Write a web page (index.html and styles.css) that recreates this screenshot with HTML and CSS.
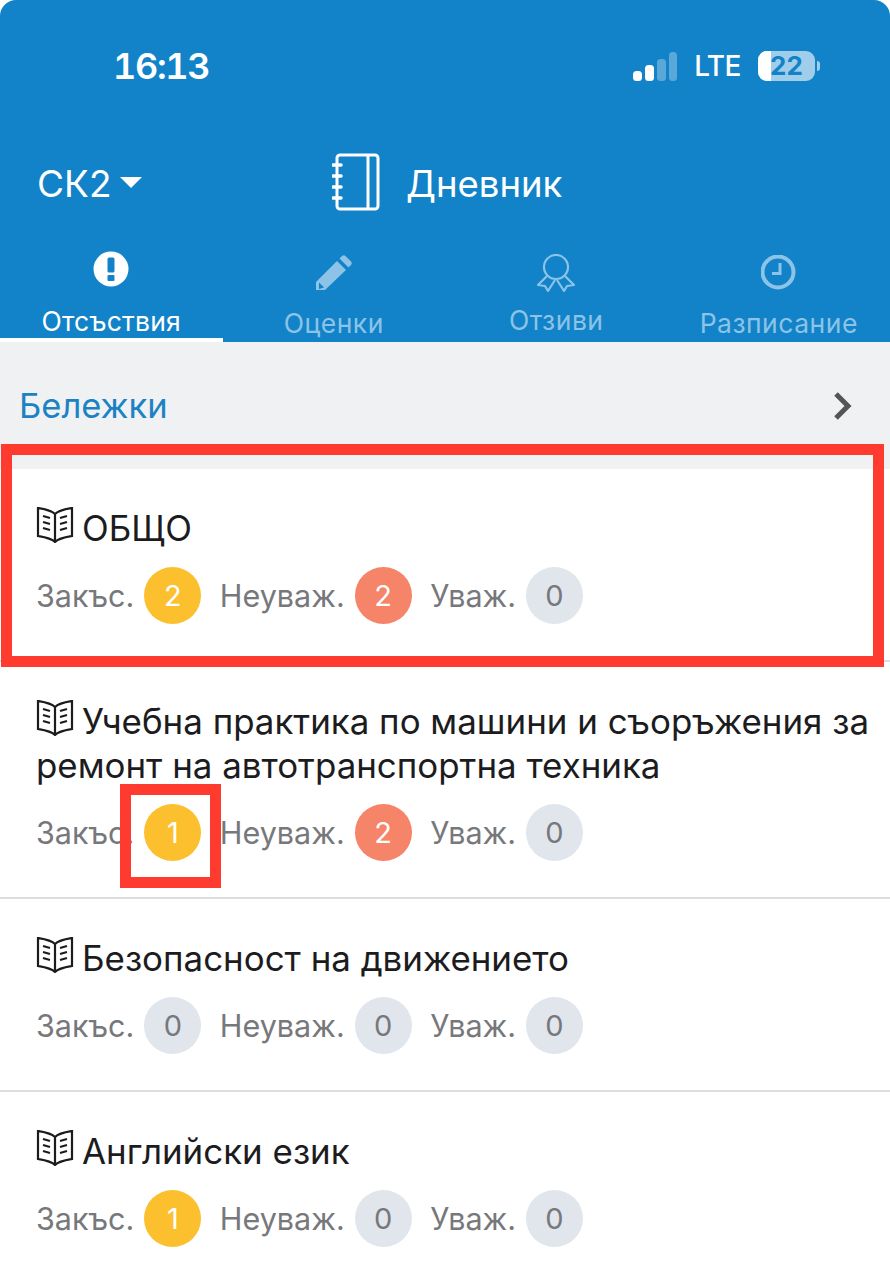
FILE: index.html
```html
<!DOCTYPE html>
<html lang="bg">
<head>
  <meta charset="UTF-8">
  <meta name="viewport" content="width=device-width, initial-scale=1.0">
  <title>Дневник</title>
  <link rel="stylesheet" href="styles.css">
</head>
<body>
  <div class="screen">
    <header class="header">
      <div class="status">
        <span class="time">16:13</span>
        <div class="status-right">
          <svg class="signal" viewBox="0 0 44 30" width="44" height="30">
            <rect x="0" y="20" width="9" height="10" rx="3.5" fill="#fff"/>
            <rect x="12" y="14" width="9" height="16" rx="3.5" fill="#fff"/>
            <rect x="24" y="8" width="9" height="22" rx="3.5" fill="#fff" opacity=".3"/>
            <rect x="36" y="1" width="8" height="29" rx="3.5" fill="#fff" opacity=".3"/>
          </svg>
          <span class="lte">LTE</span>
          <div class="battery"><span class="battery-level"></span><span class="battery-num">22</span></div>
          <span class="battery-cap"></span>
        </div>
      </div>
      <div class="titlebar">
        <div class="class-select"><span class="class-name">СК2</span><span class="caret"></span></div>
        <div class="title">
          <svg class="notebook" viewBox="0 0 50 58" width="50" height="58" fill="none" stroke="#fff" stroke-width="3">
            <rect x="5" y="2" width="41" height="54" rx="3"/>
            <path d="M36 2v54"/>
            <path d="M1 12h8M1 23h8M1 34h8M1 45h8" stroke-width="3.5" stroke-linecap="round"/>
          </svg>
          <span class="title-text">Дневник</span>
        </div>
      </div>
      <nav class="tabs">
        <div class="tab tab-active">
          <svg viewBox="0 0 36 36" width="36" height="36"><circle cx="18" cy="18" r="17.5" fill="#fff"/><rect x="14.5" y="6.500" width="7" height="15" rx="1.500" fill="#1283c9"/><rect x="14.500" y="24" width="7" height="6" rx="1" fill="#1283c9"/></svg>
          <span>Отсъствия</span>
        </div>
        <div class="tab tab-grades">
          <svg viewBox="0 0 36 36" width="36" height="36" fill="#8cc3e6"><path d="M0 35V27L21 6l9 9L9 35z"/><path d="M23.500 3.500 26 1c1-1 2.500-1 3.500 0l5.500 5.500c1 1 1 2.500 0 3.500l-2.500 2.500z"/><path d="M3 27.500 8 32.500 3 34z" fill="#1283c9"/></svg>
          <span>Оценки</span>
        </div>
        <div class="tab tab-reviews">
          <svg viewBox="0 0 38 38" width="38" height="38" fill="none" stroke="#8cc3e6" stroke-width="2.200" stroke-linejoin="round"><circle cx="19" cy="13" r="12"/><path d="M10 22 1 31l7 1 3 5 7-11M28 22l9 9-7 1-3 5-7-11"/></svg>
          <span>Отзиви</span>
        </div>
        <div class="tab tab-schedule">
          <svg viewBox="0 0 36 36" width="36" height="36" fill="none" stroke="#8cc3e6"><circle cx="17" cy="17" r="15.500" stroke-width="4"/><path d="M19 8v10.500h-8" stroke-width="3"/></svg>
          <span>Разписание</span>
        </div>
      </nav>
    </header>

    <div class="notes-row">
      <span>Бележки</span>
      <svg viewBox="0 0 20 30" width="20" height="30" fill="none" stroke="#555" stroke-width="5"><path d="M3 3l12 12L3 27"/></svg>
    </div>

    <section class="subject subject-total">
      <h2><svg class="book" viewBox="0 0 38 36" width="38" height="36" fill="none" stroke="#1c1c1e" stroke-width="2.200"><path d="M19 7C15 3 8 2 2 1v28c6 1 13 2 17 6 4-4 11-5 17-6V1c-6 1-13 2-17 6zM19 7v28"/><path d="M7 9l7 2M7 15l7 2M7 21l7 2M24 11l7-2M24 17l7-2M24 23l7-2"/></svg>ОБЩО</h2>
      <div class="counts">
        <span class="label">Закъс.</span><span class="badge badge-late">2</span>
        <span class="label">Неуваж.</span><span class="badge badge-bad">2</span>
        <span class="label">Уваж.</span><span class="badge">0</span>
      </div>
    </section>

    <section class="subject subject-long">
      <h2><svg class="book" viewBox="0 0 38 36" width="38" height="36" fill="none" stroke="#1c1c1e" stroke-width="2.200"><path d="M19 7C15 3 8 2 2 1v28c6 1 13 2 17 6 4-4 11-5 17-6V1c-6 1-13 2-17 6zM19 7v28"/><path d="M7 9l7 2M7 15l7 2M7 21l7 2M24 11l7-2M24 17l7-2M24 23l7-2"/></svg>Учебна практика по машини и съоръжения за ремонт на автотранспортна техника</h2>
      <div class="counts">
        <span class="label">Закъс.</span><span class="badge badge-late">1</span>
        <span class="label">Неуваж.</span><span class="badge badge-bad">2</span>
        <span class="label">Уваж.</span><span class="badge">0</span>
      </div>
    </section>

    <section class="subject">
      <h2><svg class="book" viewBox="0 0 38 36" width="38" height="36" fill="none" stroke="#1c1c1e" stroke-width="2.200"><path d="M19 7C15 3 8 2 2 1v28c6 1 13 2 17 6 4-4 11-5 17-6V1c-6 1-13 2-17 6zM19 7v28"/><path d="M7 9l7 2M7 15l7 2M7 21l7 2M24 11l7-2M24 17l7-2M24 23l7-2"/></svg>Безопасност на движението</h2>
      <div class="counts">
        <span class="label">Закъс.</span><span class="badge">0</span>
        <span class="label">Неуваж.</span><span class="badge">0</span>
        <span class="label">Уваж.</span><span class="badge">0</span>
      </div>
    </section>

    <section class="subject">
      <h2><svg class="book" viewBox="0 0 38 36" width="38" height="36" fill="none" stroke="#1c1c1e" stroke-width="2.200"><path d="M19 7C15 3 8 2 2 1v28c6 1 13 2 17 6 4-4 11-5 17-6V1c-6 1-13 2-17 6zM19 7v28"/><path d="M7 9l7 2M7 15l7 2M7 21l7 2M24 11l7-2M24 17l7-2M24 23l7-2"/></svg>Английски език</h2>
      <div class="counts">
        <span class="label">Закъс.</span><span class="badge badge-late">1</span>
        <span class="label">Неуваж.</span><span class="badge">0</span>
        <span class="label">Уваж.</span><span class="badge">0</span>
      </div>
    </section>

    <!-- red marks drawn over the screenshot -->
    <div class="mark mark-total"></div>
    <div class="mark mark-late"></div>
  </div>
</body>
</html>
```

FILE: styles.css
```css
html, body { margin: 0; padding: 0; background: #fff; }
body { font-family: Inter, "Noto Sans", sans-serif; color: #1c1c1e; }
.screen { position: relative; width: 890px; height: 1280px; overflow: hidden; background: #fff; }

.header { height: 342px; background: #1283c9; color: #fff; border-radius: 16px 16px 0 0; box-sizing: border-box; padding-top: 44px; }
.status { display: flex; justify-content: space-between; align-items: center; height: 44px; padding: 0 70px 0 113px; }
.time { font-size: 36px; font-weight: 600; font-variant-numeric: tabular-nums; letter-spacing: -1.300px; }
.status-right { display: flex; align-items: center; }
.signal { margin-right: 17px; }
.lte { font-size: 28px; font-weight: 500; margin-right: 17px; letter-spacing: -0.5px; }
.battery { position: relative; width: 57px; height: 30px; border-radius: 9px; background: rgba(255,255,255,.6); overflow: hidden; text-align: center; }
.battery-level { position: absolute; left: 0; top: 0; bottom: 0; width: 13px; background: #fff; }
.battery-num { position: relative; font-size: 26px; line-height: 30px; font-weight: 700; color: #1283c9; }
.battery-cap { width: 3px; height: 10px; margin-left: 2px; border-radius: 0 3px 3px 0; background: rgba(255,255,255,.6); }

.titlebar { position: relative; display: flex; align-items: center; height: 62px; margin-top: 63px; padding-left: 37px; }
.class-select { display: flex; align-items: center; font-size: 37px; }
.class-name { padding-top: 2px; }
.caret { width: 0; height: 0; margin-left: 9px; border-left: 11px solid transparent; border-right: 11px solid transparent; border-top: 11px solid #fff; }
.title { position: absolute; left: 332px; top: 2px; display: flex; align-items: center; gap: 24px; font-size: 36.500px; }
.title-text { padding-top: 3px; }

.tabs { display: grid; grid-template-columns: repeat(4, 1fr); height: 95px; margin-top: 34px; }
.tab { display: flex; flex-direction: column; align-items: center; height: 95px; box-sizing: border-box; padding-top: 4px; gap: 18px; font-size: 26.500px; color: #8cc3e6; letter-spacing: .5px; }
.tab svg { flex: none; }
.tab-active { color: #fff; border-bottom: 4px solid #fff; letter-spacing: .2px; }
.tab-grades, .tab-schedule { padding-top: 8px; gap: 16px; }
.tab-reviews { padding-top: 7px; gap: 12px; }

.notes-row { display: flex; justify-content: space-between; align-items: center; height: 127px; box-sizing: border-box; padding: 0 37px 0 19px; background: #f0f1f2; color: #1b82c4; font-size: 34.500px; }

.subject { box-sizing: border-box; height: 193px; padding: 37px 15px 0 36px; border-bottom: 2px solid #dcdde0; background: #fff; }
.subject-total { height: 193px; }
.subject-long { height: 237px; }
.subject h2 { margin: 0 0 16px; font-size: 34.900px; line-height: 44px; font-weight: 400; color: #1c1c1e; }
.book { width: 38px; height: 36px; margin-right: 8px; vertical-align: -2px; }
.counts { display: flex; align-items: center; height: 58px; font-size: 30.500px; color: #77787b; }
.label { margin-right: 10px; }
.badge { display: flex; justify-content: center; align-items: center; width: 57px; height: 57px; margin-right: 18.500px; border-radius: 50%; background: #e1e5ec; color: #77787b; font-size: 29px; }
.badge-late { background: #fcc02e; color: #fff; }
.badge-bad { background: #f68468; color: #fff; }

.mark { position: absolute; box-sizing: border-box; border: 11px solid #ff3b30; }
.mark-total { left: 1px; top: 444px; width: 883px; height: 223px; }
.mark-late { left: 120px; top: 784px; width: 101px; height: 104px; }
```
